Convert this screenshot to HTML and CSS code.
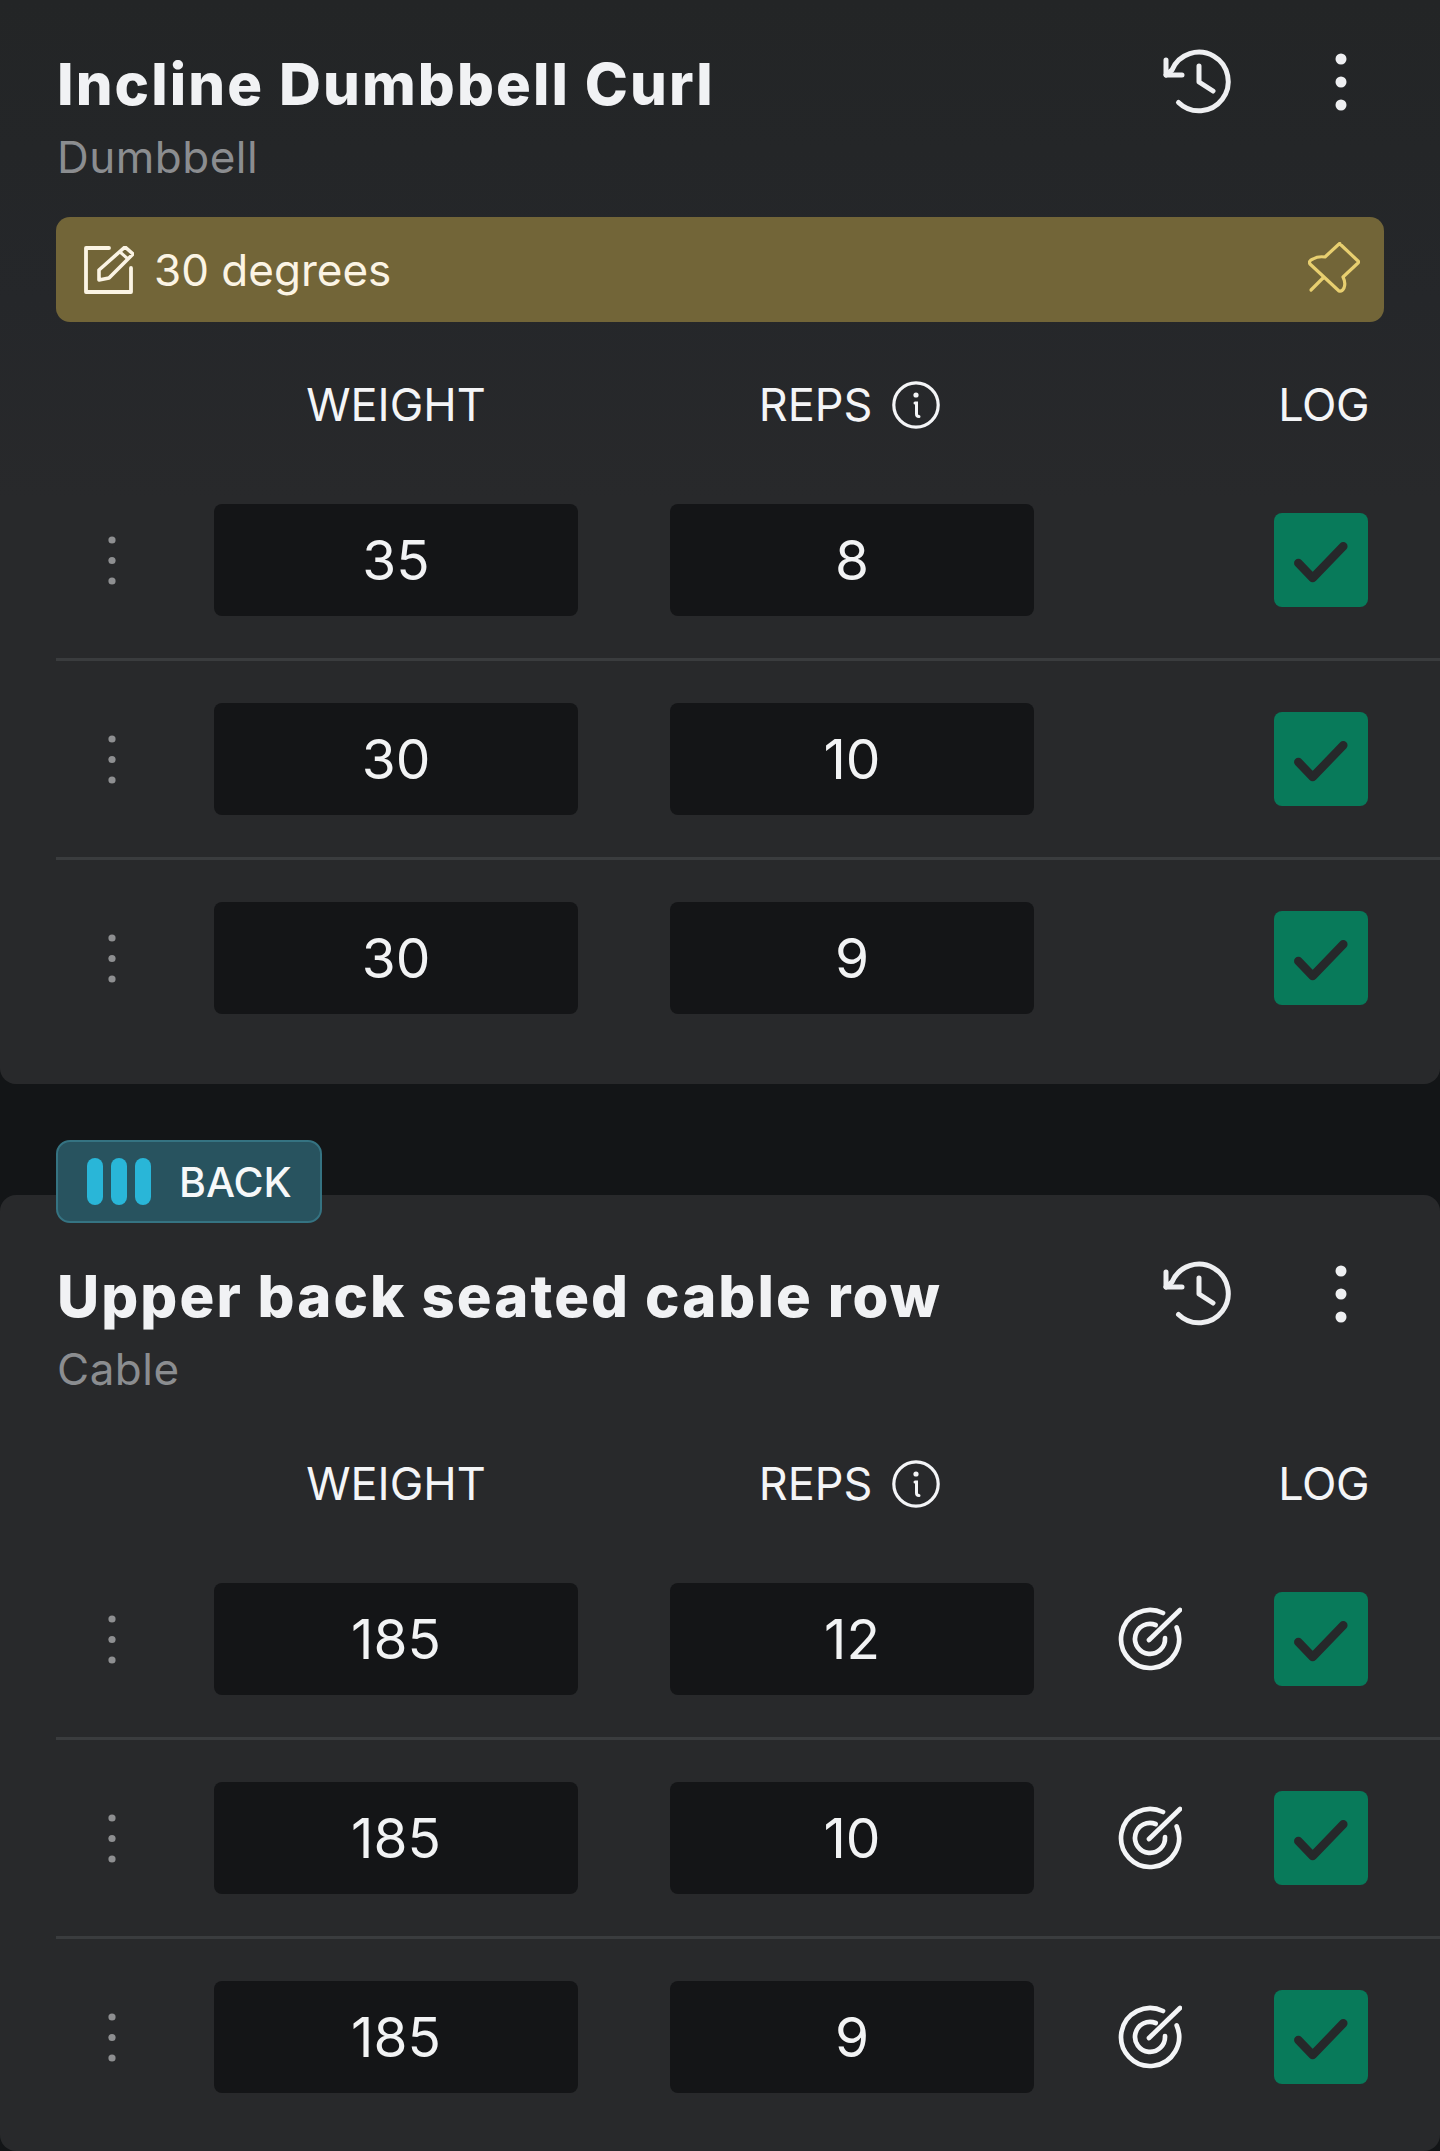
FILE: index.html
```html
<!DOCTYPE html>
<html lang="en">
<head>
<meta charset="utf-8">
<title>Workout log</title>
<link rel="stylesheet" href="styles.css">
</head>
<body>
<svg class="defs" width="0" height="0" aria-hidden="true">
  <defs>
    <symbol id="i-history" viewBox="0 0 76 72">
      <path d="M18.5 56.5A29.3 29.3 0 1 0 12 24L6 29" fill="none" stroke="currentColor" stroke-width="5" stroke-linecap="round" stroke-linejoin="round"/>
      <path d="M6 14V29H22M39 20V36L53 45" fill="none" stroke="currentColor" stroke-width="5" stroke-linecap="round" stroke-linejoin="round"/>
    </symbol>
    <symbol id="i-kebab" viewBox="0 0 12 58">
      <circle cx="6" cy="6" r="5.5" fill="currentColor"/><circle cx="6" cy="29" r="5.5" fill="currentColor"/><circle cx="6" cy="52" r="5.5" fill="currentColor"/>
    </symbol>
    <symbol id="i-grip" viewBox="0 0 8 49">
      <circle cx="4" cy="4" r="3.6" fill="currentColor"/><circle cx="4" cy="24.5" r="3.6" fill="currentColor"/><circle cx="4" cy="45" r="3.6" fill="currentColor"/>
    </symbol>
    <symbol id="i-info" viewBox="0 0 48 48">
      <circle cx="24" cy="24" r="22.2" fill="none" stroke="currentColor" stroke-width="3.2"/>
      <circle cx="24" cy="14" r="2.6" fill="currentColor"/>
      <path d="M23 22H24.5V33Q24.5 35.5 27 35.5" fill="none" stroke="currentColor" stroke-width="3" stroke-linecap="round"/>
    </symbol>
    <symbol id="i-check" viewBox="0 0 94 94">
      <path d="M24.3 50L38.7 65L69.3 33.3" fill="none" stroke="currentColor" stroke-width="8.5" stroke-linecap="round" stroke-linejoin="round"/>
    </symbol>
    <symbol id="i-target" viewBox="0 0 64 64">
      <path d="M45 6A29 29 0 1 0 58.7 20.5" fill="none" stroke="currentColor" stroke-width="4.7" stroke-linecap="round"/>
      <path d="M37.7 18A15 15 0 1 0 47 31" fill="none" stroke="currentColor" stroke-width="4.7" stroke-linecap="round"/>
      <path d="M31 33L62 3" fill="none" stroke="currentColor" stroke-width="4.7" stroke-linecap="round"/>
    </symbol>
    <symbol id="i-note" viewBox="0 0 50 48">
      <path d="M25 2H2V46H47V22" fill="none" stroke="currentColor" stroke-width="3.8" stroke-linejoin="round" stroke-linecap="round"/>
      <path d="M15 24L41 1L49 8L25 32L15 34Z" fill="none" stroke="currentColor" stroke-width="3.6" stroke-linejoin="round"/>
      <path d="M36 6L44 13" fill="none" stroke="currentColor" stroke-width="3"/>
    </symbol>
    <symbol id="i-pin" viewBox="0 0 52 52">
      <path d="M32 2L50 19Q51 20 50 21L35 35Q38 41 36 46Q34 50 31 49L2 22Q0 19 5 17Q10 14 17 15L31 2Q32 1 32 2Z" fill="none" stroke="currentColor" stroke-width="3.2" stroke-linejoin="round"/>
      <path d="M15 36L3 48" fill="none" stroke="currentColor" stroke-width="3.2" stroke-linecap="round"/>
    </symbol>
  </defs>
</svg>
<main class="page">
  <section class="card card-first">
    <header class="card-head">
      <div class="titles">
        <h2 class="title">Incline Dumbbell Curl</h2>
        <p class="kind">Dumbbell</p>
      </div>
      <div class="actions">
        <svg class="ic-history"><use href="#i-history"/></svg>
        <svg class="ic-kebab"><use href="#i-kebab"/></svg>
      </div>
    </header>
    <div class="note">
      <svg class="ic-note"><use href="#i-note"/></svg>
      <span class="note-text">30 degrees</span>
      <svg class="ic-pin"><use href="#i-pin"/></svg>
    </div>
    <div class="cols">
      <span class="col-weight">WEIGHT</span>
      <span class="col-reps">REPS <svg class="ic-info"><use href="#i-info"/></svg></span>
      <span class="col-log">LOG</span>
    </div>
    <div class="row">
      <svg class="ic-grip"><use href="#i-grip"/></svg>
      <div class="field field-weight">35</div>
      <div class="field field-reps">8</div>
      <div class="log"><svg class="ic-check"><use href="#i-check"/></svg></div>
    </div>
    <div class="row">
      <svg class="ic-grip"><use href="#i-grip"/></svg>
      <div class="field field-weight">30</div>
      <div class="field field-reps">10</div>
      <div class="log"><svg class="ic-check"><use href="#i-check"/></svg></div>
    </div>
    <div class="row row-last">
      <svg class="ic-grip"><use href="#i-grip"/></svg>
      <div class="field field-weight">30</div>
      <div class="field field-reps">9</div>
      <div class="log"><svg class="ic-check"><use href="#i-check"/></svg></div>
    </div>
  </section>

  <section class="card card-second">
    <div class="badge">
      <span class="bars"><i class="bar"></i><i class="bar"></i><i class="bar"></i></span>
      <span class="badge-text">BACK</span>
    </div>
    <header class="card-head">
      <div class="titles">
        <h2 class="title">Upper back seated cable row</h2>
        <p class="kind">Cable</p>
      </div>
      <div class="actions">
        <svg class="ic-history"><use href="#i-history"/></svg>
        <svg class="ic-kebab"><use href="#i-kebab"/></svg>
      </div>
    </header>
    <div class="cols cols-plain">
      <span class="col-weight">WEIGHT</span>
      <span class="col-reps">REPS <svg class="ic-info"><use href="#i-info"/></svg></span>
      <span class="col-log">LOG</span>
    </div>
    <div class="row">
      <svg class="ic-grip"><use href="#i-grip"/></svg>
      <div class="field field-weight">185</div>
      <div class="field field-reps">12</div>
      <div class="target"><svg class="ic-target"><use href="#i-target"/></svg></div>
      <div class="log"><svg class="ic-check"><use href="#i-check"/></svg></div>
    </div>
    <div class="row">
      <svg class="ic-grip"><use href="#i-grip"/></svg>
      <div class="field field-weight">185</div>
      <div class="field field-reps">10</div>
      <div class="target"><svg class="ic-target"><use href="#i-target"/></svg></div>
      <div class="log"><svg class="ic-check"><use href="#i-check"/></svg></div>
    </div>
    <div class="row row-last">
      <svg class="ic-grip"><use href="#i-grip"/></svg>
      <div class="field field-weight">185</div>
      <div class="field field-reps">9</div>
      <div class="target"><svg class="ic-target"><use href="#i-target"/></svg></div>
      <div class="log"><svg class="ic-check"><use href="#i-check"/></svg></div>
    </div>
  </section>
</main>
</body>
</html>
```

FILE: styles.css
```css
* { box-sizing: border-box; }
html, body { margin: 0; padding: 0; background: #131517; }
.defs { position: absolute; }
.page {
  width: 1440px;
  height: 2151px;
  overflow: hidden;
  background: #131517;
  font-family: "Inter", "Liberation Sans", sans-serif;
  color: #f4f5f7;
}
.card {
  position: relative;
  background: #28292b;
  border-radius: 16px;
}
.card-first {
  height: 1084px;
  border-radius: 0 0 16px 16px;
  background: linear-gradient(#232526 0, #25272a 300px, #28292b 500px);
}
.card-second {
  margin-top: 111px;
  height: 956px;
  padding-top: 63px;
}
.card-head {
  display: flex;
  justify-content: space-between;
  padding-left: 57px;
  padding-top: 46px;
}
.card-second .card-head { padding-top: 0; }
.titles { min-width: 0; }
.title {
  margin: 0;
  font-size: 58px;
  line-height: 76px;
  font-weight: 800;
  letter-spacing: 2.1px;
  white-space: nowrap;
  color: #f1f2f4;
}
.kind {
  margin: 10px 0 0;
  font-size: 44px;
  line-height: 50px;
  font-weight: 400;
  letter-spacing: 0.5px;
  color: #8b8d90;
}
.actions {
  display: flex;
  align-items: flex-start;
  gap: 99px;
  padding-right: 93px;
}
.ic-history { width: 76px; height: 72px; color: #eeeff1; }
.ic-kebab { width: 12px; height: 58px; margin-top: 7px; color: #eeeff1; }
.note {
  display: flex;
  align-items: center;
  margin: 35px 56px 0;
  height: 105px;
  padding: 0 24px 0 28px;
  border-radius: 14px;
  background: #726538;
}
.ic-note { width: 50px; height: 48px; color: #fbf4e4; }
.note-text {
  flex: 1;
  margin-left: 20px;
  font-size: 44px;
  color: #fbf4e4;
}
.ic-pin { width: 52px; height: 52px; margin-bottom: 4px; color: #e8cf70; }
.cols {
  display: grid;
  grid-template-columns: 158px 364px 92px 364px 1fr;
  align-items: center;
  height: 140px;
  padding: 25px 71px 0 56px;
  font-size: 45px;
  color: #f4f5f7;
}
.cols-plain { margin-top: 7px; }
.col-weight { grid-column: 2; text-align: center; }
.col-reps {
  grid-column: 4;
  display: flex;
  align-items: center;
  justify-content: center;
  gap: 20px;
  padding-right: 5px;
}
.col-log { grid-column: 5; text-align: right; letter-spacing: -0.5px; }
.ic-info { width: 48px; height: 48px; color: #f4f5f7; }
.row {
  display: grid;
  grid-template-columns: 158px 364px 92px 364px 1fr 94px;
  align-items: center;
  height: 199px;
  margin-left: 56px;
  padding-right: 72px;
  border-bottom: 3px solid #3a3c3e;
}
.row-last { border-bottom-color: transparent; }
.ic-grip { grid-column: 1; width: 8px; height: 49px; margin-left: 52px; color: #8e8f91; }
.field {
  display: flex;
  align-items: center;
  justify-content: center;
  height: 112px;
  border-radius: 8px;
  background: #141517;
  font-size: 55px;
  font-weight: 400;
  color: #f2f3f4;
}
.field-weight { grid-column: 2; }
.field-reps { grid-column: 4; }
.target { grid-column: 5; display: flex; padding-left: 84px; }
.ic-target { width: 64px; height: 64px; color: #f4f5f7; }
.log {
  grid-column: 6;
  width: 94px;
  height: 94px;
  border-radius: 8px;
  background: #087a5a;
  color: #26282a;
}
.ic-check { display: block; width: 94px; height: 94px; }
.badge {
  position: absolute;
  left: 56px;
  top: -55px;
  display: flex;
  align-items: center;
  width: 266px;
  height: 83px;
  padding-left: 29px;
  border: 2px solid #357382;
  border-radius: 14px;
  background: #28535f;
}
.bars { display: flex; gap: 8px; }
.bar { display: block; width: 16px; height: 47px; border-radius: 8px; background: #29b6d8; }
.badge-text {
  margin-left: 28px;
  font-size: 41px;
  font-weight: 500;
  color: #f6f8f9;
}
```
